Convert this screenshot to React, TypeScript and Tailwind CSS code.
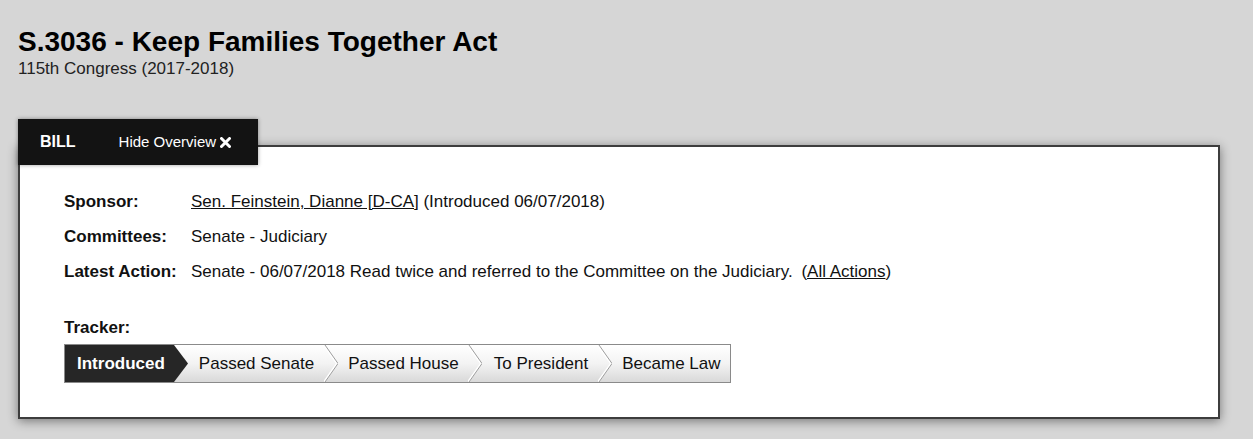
import React from "react";

const steps = [
  { label: "Introduced", pad: "pl-[12px] pr-[9px]" },
  { label: "Passed Senate", pad: "pl-[11px] pr-[10px]" },
  { label: "Passed House", pad: "pl-[10px] pr-[9px]" },
  { label: "To President", pad: "pl-[12px] pr-[10px]" },
  { label: "Became Law", pad: "pl-[10px] pr-[9px]" },
];

const Chevron = ({ dark }: { dark?: boolean }) => (
  <svg width="14" height="37" viewBox="0 0 14 37" className="shrink-0 block">
    {dark ? (
      <polygon points="0,0 14,18.5 0,37" fill="#262626" />
    ) : (
      <>
        <polyline points="0,0 13,18.5 0,37" fill="none" stroke="#ffffff" strokeWidth="2" />
        <polyline points="1,0 14,18.5 1,37" fill="none" stroke="#9c9c9c" strokeWidth="1" />
      </>
    )}
  </svg>
);

const Tracker = () => (
  <div className="flex h-[39px] w-max border border-[#8a8a8a] bg-gradient-to-b from-white via-[#f3f3f3] to-[#d9d9d9]">
    {steps.map((s, i) => (
      <React.Fragment key={s.label}>
        <div
          className={
            i === 0
              ? `flex items-center bg-[#262626] font-bold text-white ${s.pad}`
              : `flex items-center text-[#111] ${s.pad}`
          }
        >
          {s.label}
        </div>
        {i < steps.length - 1 && <Chevron dark={i === 0} />}
      </React.Fragment>
    ))}
  </div>
);

export default function App() {
  return (
    <div
      className="min-h-[439px] bg-[#d6d6d6] pl-[18px] pt-[25px] text-[17px] text-[#111]"
      style={{ fontFamily: '"Liberation Sans", Arial, sans-serif' }}
    >
      <h1 className="text-[28px] font-bold leading-[34px] text-black">S.3036 - Keep Families Together Act</h1>
      <p className="text-[17px] leading-[20px] text-[#222]">115th Congress (2017-2018)</p>

      <div className="mt-[40px] w-[1202px]">
        <div className="relative z-10 flex h-[46px] w-[240px] items-center bg-[#131313] pl-[22px] text-[16px] text-white shadow-[0_0_4px_rgba(0,0,0,0.4)]">
          <span className="font-bold">BILL</span>
          <span className="ml-[43px] flex items-center gap-[4px] text-[15px]">
            Hide Overview
            <svg width="11" height="11" viewBox="0 0 11 11">
              <path d="M1.5 1.5 L9.5 9.5 M9.5 1.5 L1.5 9.5" stroke="white" strokeWidth="3" strokeLinecap="round" />
            </svg>
          </span>
        </div>
        <div className="-mt-[20px] h-[274px] border-2 border-[#3d3d3d] bg-white pl-[44px] pt-[45px] shadow-[0_2px_10px_rgba(0,0,0,0.45)]">
          <div className="grid grid-cols-[127px_1fr] gap-y-[16px] leading-[19px]">
            <span className="font-bold">Sponsor:</span>
            <span>
              <span className="underline">Sen. Feinstein, Dianne [D-CA]</span> (Introduced 06/07/2018)
            </span>
            <span className="font-bold">Committees:</span>
            <span>Senate - Judiciary</span>
            <span className="font-bold">Latest Action:</span>
            <span>
              Senate - 06/07/2018 Read twice and referred to the Committee on the Judiciary.{" "}
              <span className="ml-[4px]">
                (<span className="underline">All Actions</span>)
              </span>
            </span>
          </div>
          <p className="mt-[37px] font-bold leading-[19px]">Tracker:</p>
          <div className="mt-[7px]">
            <Tracker />
          </div>
        </div>
      </div>
    </div>
  );
}
